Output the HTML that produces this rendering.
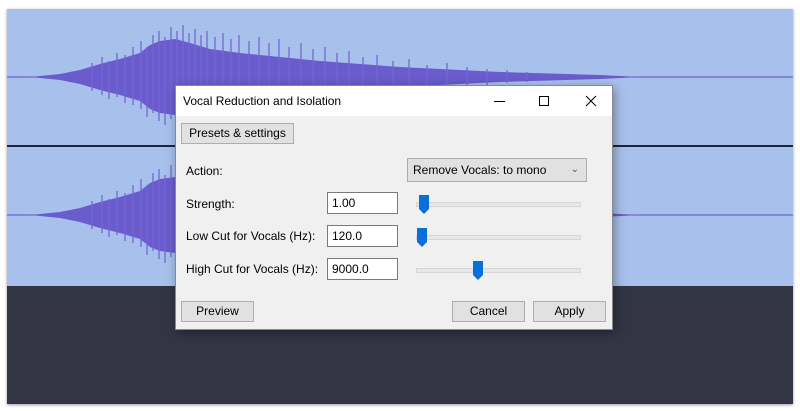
<!DOCTYPE html>
<html><head><meta charset="utf-8"><style>
body{margin:0;width:800px;height:411px;background:#fff;position:relative;overflow:hidden;font-family:"Liberation Sans",sans-serif;font-size:12px;color:#000}
.app{position:absolute;left:7px;top:9px;width:786px;height:395px;background:#333545;box-shadow:0 1px 3px rgba(0,0,0,.4)}
.dlg{position:absolute;left:175px;top:85px;width:436px;height:243px;background:#f0f0f0;border:1px solid #8a8a8a;box-shadow:2px 3px 10px rgba(0,0,0,.35)}
.tb{height:30px;background:#fff;position:relative}
.tb span{position:absolute;left:7px;top:8px;font-size:12px}
.btn{position:absolute;background:#e1e1e1;border:1px solid #adadad;text-align:center;line-height:18px;box-sizing:border-box}
.lbl{position:absolute;left:10px}
.inp{position:absolute;left:151px;width:71px;height:22px;border:1px solid #7a7a7a;background:#fff;box-sizing:border-box;padding:3px 4px}
.trk{position:absolute;left:240px;width:163px;height:3px;background:#e7e7e7;border:1px solid #d6d6d6}
.th{position:absolute;width:10px;height:19px}
</style></head><body>
<div class="app">
<svg width="786" height="277" style="position:absolute;left:0;top:0">
<defs>
<g id="w">
<path d="M23 0 L53 -3 L73 -7 L93 -13 L113 -18 L133 -24 L143 -32 L153 -36 L168 -38 L183 -34 L203 -28 L233 -24 L273 -20 L313 -16 L393 -10 L493 -5 L593 -2 L633 0 L593 2 L493 5 L393 10 L313 16 L273 20 L233 24 L203 28 L183 34 L168 38 L153 36 L143 32 L133 24 L113 18 L93 13 L73 7 L53 3 Z" fill="#6a5ccc"/>
<path stroke="#7466d2" stroke-width="1.3" fill="none" d="M85 -14V14M95 -20V18M102 -16V22M110 -24V20M118 -22V26M126 -30V28M134 -36V32M140 -30V40M146 -42V36M152 -46V44M158 -40V48M164 -50V42M170 -46V50M176 -52V44M182 -44V46M188 -48V40M194 -42V44M200 -46V38M208 -40V42M216 -44V36M224 -38V40M232 -42V34M242 -36V38M252 -40V30M262 -34V36M272 -38V28M282 -30V32M294 -34V26M306 -28V30M318 -30V22M330 -24V26M342 -26V20M356 -20V22M370 -22V16M386 -16V18M402 -18V12M420 -12V14M440 -14V10M460 -10V10M480 -8V8M500 -7V6M520 -5V5"/>
</g>
</defs>
<rect width="786" height="277" fill="#a8c0ec"/>
<line x1="0" y1="137" x2="786" y2="137" stroke="#20243a" stroke-width="2"/>
<line x1="0" y1="68" x2="786" y2="68" stroke="#5a50c8" stroke-width="1"/>
<line x1="0" y1="206" x2="786" y2="206" stroke="#5a50c8" stroke-width="1"/>
<use href="#w" transform="translate(0,68)"/>
<use href="#w" transform="translate(0,206)"/>
</svg>
</div>
<div class="dlg">
<div class="tb"><span>Vocal Reduction and Isolation</span>
<svg width="130" height="30" style="position:absolute;right:0;top:0" stroke="#000" fill="none" stroke-width="1">
<line x1="12" y1="15.5" x2="23" y2="15.5"/>
<rect x="57.5" y="10.5" width="9" height="9"/>
<path d="M104 10 L114 20 M114 10 L104 20"/>
</svg></div>
<div class="btn" style="left:5px;top:37px;width:113px;height:21px">Presets &amp; settings</div>
<div class="lbl" style="top:78px">Action:</div>
<div class="btn" style="left:231px;top:72px;width:180px;height:24px;line-height:22px;text-align:left;padding-left:5px">Remove Vocals: to mono<span style="position:absolute;right:7px;top:0;color:#555;font-size:10px">&#8964;</span></div>
<div class="lbl" style="top:111px">Strength:</div>
<div class="inp" style="top:106px">1.00</div>
<div class="lbl" style="top:143px">Low Cut for Vocals (Hz):</div>
<div class="inp" style="top:139px">120.0</div>
<div class="lbl" style="top:176px">High Cut for Vocals (Hz):</div>
<div class="inp" style="top:172px">9000.0</div>
<div class="trk" style="top:116px"></div>
<div class="trk" style="top:149px"></div>
<div class="trk" style="top:182px"></div>
<svg class="th" style="left:243px;top:109px" viewBox="0 0 10 19"><path d="M0 0H10V14L5 19L0 14Z" fill="#0a6fd6"/></svg>
<svg class="th" style="left:241px;top:142px" viewBox="0 0 10 19"><path d="M0 0H10V14L5 19L0 14Z" fill="#0a6fd6"/></svg>
<svg class="th" style="left:297px;top:175px" viewBox="0 0 10 19"><path d="M0 0H10V14L5 19L0 14Z" fill="#0a6fd6"/></svg>
<div class="btn" style="left:5px;top:215px;width:73px;height:21px">Preview</div>
<div class="btn" style="left:276px;top:215px;width:73px;height:21px">Cancel</div>
<div class="btn" style="left:357px;top:215px;width:73px;height:21px">Apply</div>
</div>
</body></html>
